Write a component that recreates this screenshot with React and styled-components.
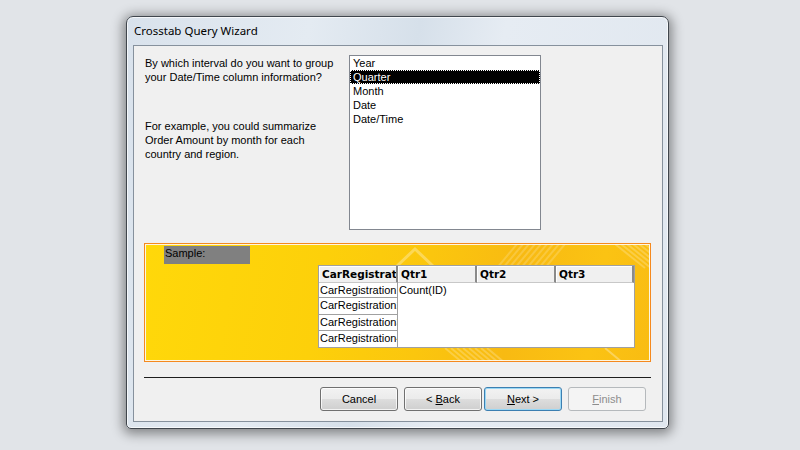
import React from "react";
import styled, { createGlobalStyle } from "styled-components";

const GlobalStyle = createGlobalStyle`
  html, body { margin: 0; padding: 0; width: 800px; height: 450px; overflow: hidden; background: #e1e4e8; }
  body { font-family: "Liberation Sans", Arial, sans-serif; }
  * { box-sizing: border-box; }
`;

const Desktop = styled.div`
  width: 800px;
  height: 450px;
  padding: 16px 0 0 126px;
  background: #e1e4e8;
`;

const Window = styled.div`
  width: 543px;
  height: 413px;
  border: 1px solid #40464d;
  border-radius: 7px 7px 5px 5px;
  background: linear-gradient(100deg, #d9e2ec 0%, #e4ebf2 30%, #d6e0ea 48%, #e6ecf3 62%, #e0e7ef 100%);
  box-shadow: 0 2px 12px 3px rgba(0, 0, 0, 0.42), inset 0 0 0 1px rgba(255, 255, 255, 0.7);
  display: flex;
  flex-direction: column;
  padding: 0 5px 6px 6px;
`;

const TitleBar = styled.div`
  height: 28px;
  display: flex;
  align-items: center;
  padding-left: 1px;
  padding-bottom: 1px;
  font-family: "Noto Sans", "Open Sans", sans-serif;
  font-size: 11.5px;
  color: #000;
`;

const Client = styled.div`
  flex: 1;
  background: #f0f0f0;
  border: 1px solid #86919d;
  padding: 9px 11px 0 10px;
  display: flex;
  flex-direction: column;
  font-size: 11px;
  color: #000;
`;

const TopRow = styled.div`
  display: flex;
`;

const Instructions = styled.div`
  width: 205px;
  padding-left: 1px;
  padding-top: 1px;
  line-height: 14px;
`;

const Para = styled.p`
  margin: ${(p) => (p.$gap ? "35px 0 0" : "0")};
`;

const ListBox = styled.div`
  width: 192px;
  height: 175px;
  background: #fff;
  border: 1px solid #828790;
  display: flex;
  flex-direction: column;
`;

const ListItem = styled.div`
  height: 14px;
  line-height: 12px;
  padding-left: 2px;
  border: 1px dotted ${(p) => (p.$selected ? "#fff" : "transparent")};
  background: ${(p) => (p.$selected ? "#000" : "transparent")};
  color: ${(p) => (p.$selected ? "#fff" : "#000")};
`;

const SamplePanel = styled.div`
  position: relative;
  margin-top: 13px;
  width: 507px;
  height: 119px;
  border: 1px solid #f5891e;
  box-shadow: inset 0 0 0 1px #fff6e0;
  background: linear-gradient(100deg, #ffd80a 0%, #fdd00a 35%, #fbc60e 55%, #f8ba12 72%, #fbc313 88%, #f9bc12 100%);
  padding: 2px 0 0 19px;
  display: flex;
  flex-direction: column;
  overflow: hidden;
`;

const Decor = styled.svg`
  position: absolute;
  left: 0;
  top: 0;
  pointer-events: none;
`;

const SampleLabel = styled.div`
  position: relative;
  width: 86px;
  height: 18px;
  background: #808080;
  padding-left: 1px;
  line-height: 14px;
`;

const Grid = styled.div`
  position: relative;
  margin: 1px 0 0 154px;
  width: 317px;
  display: grid;
  grid-template-columns: 79px 79px 79px 78px;
  grid-template-rows: 17px 15px 17px 16px 16px;
  border: 1px solid #a0a0a0;
  background: #fff;
`;

const HeadCell = styled.div`
  background: #f0f0f0;
  border-right: 2px solid #8a8a8a;
  border-bottom: 1px solid #c8c8c8;
  box-shadow: inset 1px 1px 0 #fff;
  font-family: "DejaVu Sans", Verdana, sans-serif;
  font-size: 10.5px;
  font-weight: bold;
  padding-left: 3px;
  line-height: 16px;
  white-space: nowrap;
  overflow: hidden;
`;

const RowCell = styled.div`
  grid-column: 1;
  border-right: 1px solid #a0a0a0;
  border-bottom: ${(p) => (p.$last ? "0" : "1px solid #a0a0a0")};
  padding-left: 1px;
  line-height: 14px;
  white-space: nowrap;
  overflow: hidden;
`;

const DataArea = styled.div`
  grid-column: 2 / 5;
  grid-row: 2 / 6;
  padding-left: 1px;
  line-height: 14px;
`;

const Separator = styled.div`
  margin-top: 15px;
  width: 507px;
  height: 1px;
  background: #1e1e1e;
`;

const ButtonRow = styled.div`
  margin-top: 9px;
  display: flex;
  justify-content: flex-end;
  padding-right: 5px;
`;

const Button = styled.button`
  width: 78px;
  height: 24px;
  margin-left: ${(p) => p.$gap}px;
  font-family: "Liberation Sans", Arial, sans-serif;
  font-size: 11px;
  color: ${(p) => (p.$disabled ? "#8d8d8d" : "#000")};
  border-radius: 3px;
  border: 1px solid ${(p) => (p.$focus ? "#3c7fb1" : p.$disabled ? "#b5b9bc" : "#707070")};
  background: ${(p) =>
    p.$disabled
      ? "#f4f4f4"
      : "linear-gradient(to bottom, #f2f2f2 0%, #ebebeb 50%, #dddddd 51%, #cfcfcf 100%)"};
  box-shadow: ${(p) =>
    p.$focus
      ? "inset 0 0 0 1px #9ad8f5"
      : p.$disabled
      ? "none"
      : "inset 0 0 0 1px rgba(255,255,255,0.75)"};
  padding: 0;
  u { text-decoration: underline; }
`;

const rows = ["CarRegistration1", "CarRegistration2", "CarRegistration3", "CarRegistration4"];

export default function App() {
  return (
    <>
      <GlobalStyle />
      <Desktop>
        <Window>
          <TitleBar>Crosstab Query Wizard</TitleBar>
          <Client>
            <TopRow>
              <Instructions>
                <Para>
                  By which interval do you want to group
                  <br />
                  your Date/Time column information?
                </Para>
                <Para $gap>
                  For example, you could summarize
                  <br />
                  Order Amount by month for each
                  <br />
                  country and region.
                </Para>
              </Instructions>
              <ListBox>
                <ListItem>Year</ListItem>
                <ListItem $selected>Quarter</ListItem>
                <ListItem>Month</ListItem>
                <ListItem>Date</ListItem>
                <ListItem>Date/Time</ListItem>
              </ListBox>
            </TopRow>
            <SamplePanel>
              <Decor width="507" height="119" viewBox="0 0 507 119">
                <polyline points="252,22 270,5 288,22" fill="none" stroke="rgba(255,255,255,0.3)" strokeWidth="3" />
                {Array.from({ length: 9 }).map((_, i) => (
                  <line key={"a" + i} x1={352 + i * 6} y1={24} x2={372 + i * 6} y2={0} stroke="rgba(255,255,255,0.18)" strokeWidth="2" />
                ))}
                {Array.from({ length: 7 }).map((_, i) => (
                  <line key={"b" + i} x1={470 + i * 6} y1={0} x2={500 + i * 6} y2={24} stroke="rgba(255,255,255,0.22)" strokeWidth="2" />
                ))}
                {Array.from({ length: 8 }).map((_, i) => (
                  <line key={"c" + i} x1={300 + i * 6} y1={104} x2={318 + i * 6} y2={119} stroke="rgba(255,255,255,0.22)" strokeWidth="2" />
                ))}
                <line x1="460" y1="104" x2="478" y2="119" stroke="rgba(255,255,255,0.3)" strokeWidth="2" />
              </Decor>
              <SampleLabel>Sample:</SampleLabel>
              <Grid>
                <HeadCell>CarRegistration</HeadCell>
                <HeadCell>Qtr1</HeadCell>
                <HeadCell>Qtr2</HeadCell>
                <HeadCell>Qtr3</HeadCell>
                {rows.map((r, i) => (
                  <RowCell key={r} $last={i === rows.length - 1}>
                    {r}
                  </RowCell>
                ))}
                <DataArea>Count(ID)</DataArea>
              </Grid>
            </SamplePanel>
            <Separator />
            <ButtonRow>
              <Button $gap={0}>Cancel</Button>
              <Button $gap={6}>
                &lt; <u>B</u>ack
              </Button>
              <Button $gap={2} $focus>
                <u>N</u>ext &gt;
              </Button>
              <Button $gap={6} $disabled>
                <u>F</u>inish
              </Button>
            </ButtonRow>
          </Client>
        </Window>
      </Desktop>
    </>
  );
}
